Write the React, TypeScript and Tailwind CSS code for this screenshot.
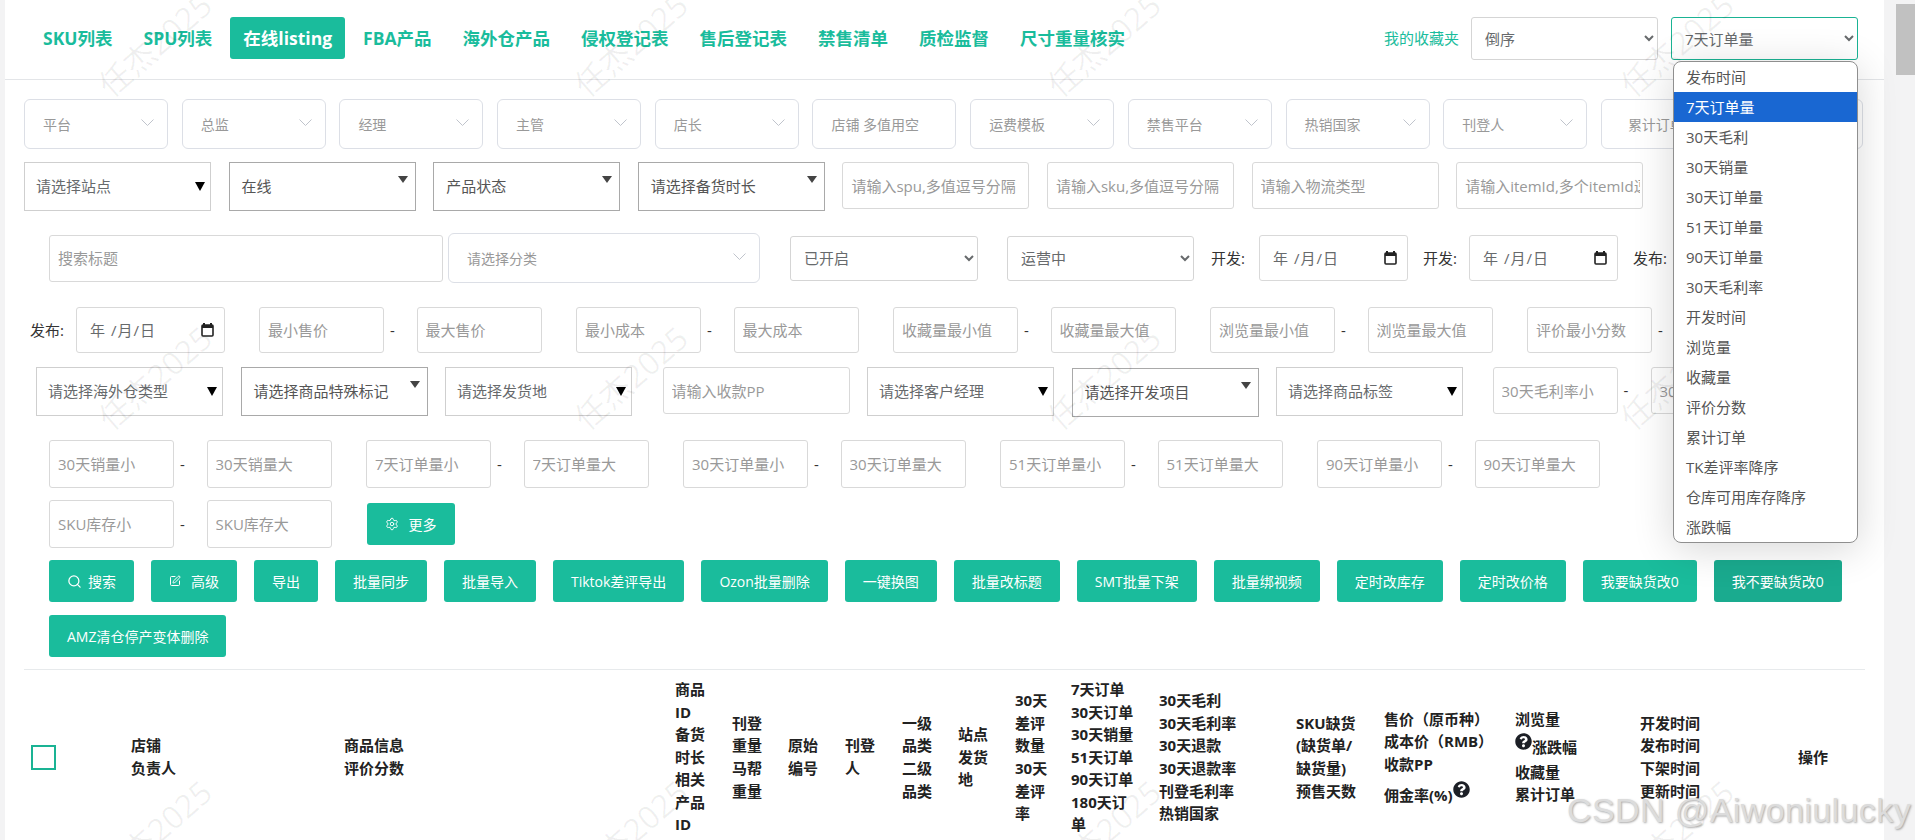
import React from "react";
import { Search, SquarePen, Settings } from "lucide-react";
import { FaQuestionCircle } from "react-icons/fa";

const tabs = ["SKU列表", "SPU列表", "在线listing", "FBA产品", "海外仓产品", "侵权登记表", "售后登记表", "禁售清单", "质检监督", "尺寸重量核实"];
const options = ["发布时间", "7天订单量", "30天毛利", "30天销量", "30天订单量", "51天订单量", "90天订单量", "30天毛利率", "开发时间", "浏览量", "收藏量", "评价分数", "累计订单", "TK差评率降序", "仓库可用库存降序", "涨跌幅"];

function Chevron() {
  return (
    <svg width="13" height="7" viewBox="0 0 13 7" className="shrink-0 -translate-y-[2px]" fill="none" stroke="#c0c4cc" strokeWidth="1">
      <path d="M0.5 0.5 L6.5 6.5 L12.5 0.5" />
    </svg>
  );
}

function Fancy({ label, wide }: { label: string; wide?: boolean }) {
  return (
    <div className={wide ? "flex h-[50px] w-[312px] shrink-0 items-center justify-between rounded-[6px] border border-[#dcdfe6] bg-white pl-[18px] pr-[13px] text-[14px] text-[#999]" : "flex h-[50px] w-[144px] shrink-0 items-center justify-between rounded-[6px] border border-[#dcdfe6] bg-white pl-[18px] pr-[13px] text-[14px] text-[#999]"}>
      <span className="whitespace-nowrap">{label}</span>
      <Chevron />
    </div>
  );
}

function Tri({ label, dark }: { label: string; dark?: boolean }) {
  return (
    <div className={dark ? "flex h-[49px] w-[187px] shrink-0 items-center justify-between border border-[#a9a9a9] bg-white pl-[12px] pr-[7px] text-[15px] text-[#555]" : "flex h-[49px] w-[187px] shrink-0 items-center justify-between border border-[#cfcfcf] bg-white pl-[11px] pr-[5px] text-[15px] text-[#676a6c]"}>
      <span className="whitespace-nowrap">{label}</span>
      {dark ? (
        <svg width="10" height="7" viewBox="0 0 10 7" className="shrink-0 -translate-y-[7px]">
          <path d="M0 0 H10 L5 7 Z" fill="#444" />
        </svg>
      ) : (
        <svg width="10" height="9" viewBox="0 0 10 9" className="shrink-0">
          <path d="M0 0 H10 L5 9 Z" fill="#000" />
        </svg>
      )}
    </div>
  );
}

function Field({ ph, w }: { ph: string; w?: string }) {
  return (
    <input
      readOnly
      placeholder={ph}
      className={(w ?? "w-[125px]") + " h-[47px] shrink-0 rounded-[3px] border border-[#d9d9d9] bg-white pl-[8px] pr-[2px] text-[15px] text-[#676a6c] outline-none placeholder:text-[#999]"}
    />
  );
}

function Range({ a, b, tall }: { a: string; b: string; tall?: boolean }) {
  return (
    <div className="flex shrink-0 items-center">
      <input readOnly placeholder={a} className={(tall ? "h-[48px] " : "h-[46px] ") + "w-[125px] rounded-[3px] border border-[#d9d9d9] bg-white pl-[8px] text-[15px] outline-none placeholder:text-[#999]"} />
      <span className="w-[32.5px] pl-[6px] text-[15px] text-[#333]">-</span>
      <input readOnly placeholder={b} className={(tall ? "h-[48px] " : "h-[46px] ") + "w-[125px] rounded-[3px] border border-[#d9d9d9] bg-white pl-[8px] text-[15px] outline-none placeholder:text-[#999]"} />
    </div>
  );
}

function DateBox() {
  return (
    <div className="flex h-[46px] w-[149px] shrink-0 items-center justify-between rounded-[3px] border border-[#d9d9d9] bg-white pl-[13px] pr-[10px] text-[15px] tracking-[1px] text-[#676a6c]">
      <span className="whitespace-nowrap">年 /月/日</span>
      <svg width="13" height="14" viewBox="0 0 13 14" className="shrink-0">
        <path d="M3 0 V2 M10 0 V2" stroke="#222" strokeWidth="2" />
        <rect x="1" y="2" width="11" height="11" rx="1" fill="none" stroke="#222" strokeWidth="1.6" />
        <rect x="1" y="2" width="11" height="3" fill="#222" />
      </svg>
    </div>
  );
}

function NativeSelect({ value, w, focus }: { value: string; w?: string; focus?: boolean }) {
  return (
    <select
      defaultValue={value}
      className={(w ?? "w-[187px]") + (focus ? " border-[#1ab394]" : " border-[#d5d5d5]") + " h-[43px] shrink-0 rounded-[3px] border bg-white pl-[9px] text-[15px] text-[#676a6c] outline-none"}
    >
      <option>{value}</option>
    </select>
  );
}

function Btn({ children, dark }: { children: React.ReactNode; dark?: boolean }) {
  return (
    <div className={(dark ? "bg-[#1aab8f] " : "bg-[#1abc9c] ") + "flex h-[42px] shrink-0 items-center whitespace-nowrap rounded-[3px] px-[18px] text-[14px] text-white"}>
      {children}
    </div>
  );
}

const Q = () => <FaQuestionCircle className="inline-block align-[3px] text-[#1c1f26]" size={17} />;

const cols: { w: string; lines: React.ReactNode[] }[] = [
  { w: "w-[213px]", lines: ["店铺", "负责人"] },
  { w: "w-[331px]", lines: ["商品信息", "评价分数"] },
  { w: "w-[57px]", lines: ["商品", "ID", "备货", "时长", "相关", "产品", "ID"] },
  { w: "w-[56px]", lines: ["刊登", "重量", "马帮", "重量"] },
  { w: "w-[57px]", lines: ["原始", "编号"] },
  { w: "w-[57px]", lines: ["刊登", "人"] },
  { w: "w-[56px]", lines: ["一级", "品类", "二级", "品类"] },
  { w: "w-[57px]", lines: ["站点", "发货", "地"] },
  { w: "w-[56px]", lines: ["30天", "差评", "数量", "30天", "差评", "率"] },
  { w: "w-[88px]", lines: ["7天订单", "30天订单", "30天销量", "51天订单", "90天订单", "180天订", "单"] },
  { w: "w-[137px]", lines: ["30天毛利", "30天毛利率", "30天退款", "30天退款率", "刊登毛利率", "热销国家"] },
  { w: "w-[88px]", lines: ["SKU缺货", "(缺货单/", "缺货量)", "预售天数"] },
  { w: "w-[131px]", lines: ["售价（原币种）", "成本价（RMB）", "收款PP", <span key="y" className="mt-[5px] block">佣金率(%)<Q /></span>] },
  { w: "w-[125px]", lines: ["浏览量", <span key="z" className="my-[2px] block"><Q />涨跌幅</span>, "收藏量", "累计订单"] },
  { w: "w-[158px]", lines: ["开发时间", "发布时间", "下架时间", "更新时间"] },
  { w: "w-[60px]", lines: ["操作"] },
];

const marks = [
  "left-[83px] top-[21px]", "left-[559px] top-[21px]", "left-[1032px] top-[21px]", "left-[1605px] top-[21px]",
  "left-[83px] top-[354px]", "left-[559px] top-[354px]", "left-[1032px] top-[354px]", "left-[1605px] top-[354px]",
  "left-[83px] top-[808px]", "left-[559px] top-[808px]", "left-[1032px] top-[808px]", "left-[1605px] top-[808px]",
];

export default function App() {
  return (
    <div className="relative flex h-[840px] w-[1915px] overflow-hidden bg-[#f3f3f4] font-['Open_Sans','Noto_Sans_CJK_SC',sans-serif]">
      <main className="ml-[5px] h-[840px] w-[1879px] shrink-0 overflow-hidden bg-white">
        <header className="flex h-[80px] items-start border-b border-[#e3e5e8] pl-[25px] pr-[26px] pt-[17px]">
          <nav className="flex gap-[5px]">
            {tabs.map((t) => (
              <div key={t} className={t === "在线listing" ? "flex h-[42px] items-center whitespace-nowrap rounded-[3px] bg-[#1abc9c] px-[13px] text-[17.5px] font-bold text-white" : "flex h-[42px] items-center whitespace-nowrap px-[13px] text-[17.5px] font-bold text-[#1abc9c]"}>
                {t}
              </div>
            ))}
          </nav>
          <div className="ml-auto flex items-center">
            <span className="mr-[12px] text-[15px] text-[#1abc9c]">我的收藏夹</span>
            <NativeSelect value="倒序" />
            <div className="w-[13px]" />
            <NativeSelect value="7天订单量" focus />
          </div>
        </header>

        <div className="ml-[19px] mt-[19px] flex gap-[13.7px]">
          {["平台", "总监", "经理", "主管", "店长"].map((x) => <Fancy key={x} label={x} />)}
          <Field ph="店铺 多值用空" w="w-[144px] !h-[50px] !rounded-[6px] !border-[#dcdfe6] !pl-[18px] !text-[14px]" />
          {["运费模板", "禁售平台", "热销国家", "刊登人"].map((x) => <Fancy key={x} label={x} />)}
          <Field ph="累计订单" w="w-[262px] !h-[50px] !rounded-[6px] !border-[#dcdfe6] !pl-[26px] !text-[14px]" />
        </div>

        <div className="ml-[19px] mt-[13px] flex items-start gap-[17.6px]">
          <Tri label="请选择站点" />
          <Tri label="在线" dark />
          <Tri label="产品状态" dark />
          <Tri label="请选择备货时长" dark />
          <Field ph="请输入spu,多值逗号分隔" w="w-[187px]" />
          <Field ph="请输入sku,多值逗号分隔" w="w-[187px]" />
          <Field ph="请输入物流类型" w="w-[187px]" />
          <Field ph="请输入itemId,多个itemId逗号分隔" w="w-[187px]" />
        </div>

        <div className="ml-[44px] mt-[22px] flex h-[50px] items-center">
          <Field ph="搜索标题" w="w-[394px]" />
          <div className="ml-[5px]"><Fancy label="请选择分类" wide /></div>
          <div className="ml-[30px]"><NativeSelect value="已开启" w="w-[188px] !h-[45px]" /></div>
          <div className="ml-[29px]"><NativeSelect value="运营中" w="w-[187px] !h-[45px]" /></div>
          <span className="ml-[17px] w-[48px] text-[15px] text-[#333]">开发:</span>
          <DateBox />
          <span className="ml-[15px] w-[46px] text-[15px] text-[#333]">开发:</span>
          <DateBox />
          <span className="ml-[15px] w-[47px] text-[15px] text-[#333]">发布:</span>
          <DateBox />
        </div>

        <div className="ml-[25px] mt-[24px] flex h-[46px] items-center">
          <span className="w-[46px] text-[15px] text-[#333]">发布:</span>
          <DateBox />
          <div className="ml-[34px] flex gap-[34.5px]">
            <Range a="最小售价" b="最大售价" />
            <Range a="最小成本" b="最大成本" />
            <Range a="收藏量最小值" b="收藏量最大值" />
            <Range a="浏览量最小值" b="浏览量最大值" />
            <Range a="评价最小分数" b="评价最大分数" />
          </div>
        </div>

        <div className="ml-[31px] mt-[14px] flex items-start gap-[17.5px]">
          <Tri label="请选择海外仓类型" />
          <Tri label="请选择商品特殊标记" dark />
          <Tri label="请选择发货地" />
          <div className="ml-[13px]"><Field ph="请输入收款PP" w="w-[187px]" /></div>
          <Tri label="请选择客户经理" />
          <div className="mt-[1px]"><Tri label="请选择开发项目" dark /></div>
          <Tri label="请选择商品标签" />
          <div className="ml-[12px] flex items-center">
            <Field ph="30天毛利率小" />
            <span className="w-[33px] pl-[6px] text-[15px] text-[#333]">-</span>
            <Field ph="30天毛利率大" />
          </div>
        </div>

        <div className="ml-[44px] mt-[23px] flex gap-[34.5px]">
          <Range tall a="30天销量小" b="30天销量大" />
          <Range tall a="7天订单量小" b="7天订单量大" />
          <Range tall a="30天订单量小" b="30天订单量大" />
          <Range tall a="51天订单量小" b="51天订单量大" />
          <Range tall a="90天订单量小" b="90天订单量大" />
        </div>

        <div className="ml-[44px] mt-[12px] flex items-center gap-[35px]">
          <Range tall a="SKU库存小" b="SKU库存大" />
          <Btn><Settings size={14} strokeWidth={1.6} className="mr-[10px]" />更多</Btn>
        </div>

        <div className="ml-[44px] mt-[12px] flex gap-[17px]">
          <Btn><Search size={15} strokeWidth={2} className="mr-[6px]" />搜索</Btn>
          <Btn><SquarePen size={12} strokeWidth={2} className="mr-[10px]" />高级</Btn>
          {["导出", "批量同步", "批量导入", "Tiktok差评导出", "Ozon批量删除", "一键换图", "批量改标题", "SMT批量下架", "批量绑视频", "定时改库存", "定时改价格", "我要缺货改0"].map((x) => <Btn key={x}>{x}</Btn>)}
          <Btn dark>我不要缺货改0</Btn>
        </div>

        <div className="ml-[44px] mt-[13px] flex">
          <Btn>AMZ清仓停产变体删除</Btn>
        </div>

        <div className="ml-[19px] mt-[12px] w-[1841px] border-t border-[#e7eaec]" />

        <div className="ml-[26px] flex h-[174px] items-center text-[15px] font-bold leading-[22.6px] text-[#222]">
          <div className="w-[100px] shrink-0">
            <div className="h-[25px] w-[25px] border-2 border-[#1ab394] bg-white" />
          </div>
          {cols.map((c, i) => (
            <div key={i} className={c.w + " shrink-0 whitespace-nowrap"}>
              {c.lines.map((l, j) => <div key={j}>{l}</div>)}
            </div>
          ))}
        </div>
      </main>

      <aside className="ml-[12px] mt-[4px] h-[71px] w-[19px] bg-[#c1c1c1]" />

      {marks.map((m) => (
        <div key={m} className={m + " pointer-events-none absolute z-10 w-[144px] -rotate-[41deg] whitespace-nowrap text-center text-[32px] leading-[48px] text-black/[0.06]"}>任杰2025</div>
      ))}

      <ul className="absolute left-[1673px] top-[61px] z-20 w-[185px] overflow-hidden rounded-[8px] border border-[#8f8f8f] bg-white shadow-[0_6px_40px_rgba(0,0,0,0.16)]">
        {options.map((o) => (
          <li key={o} className={o === "7天订单量" ? "flex h-[30px] items-center bg-[#1967d2] pl-[12px] text-[15px] text-white" : "flex h-[30px] items-center pl-[12px] text-[15px] text-[#555]"}>
            {o}
          </li>
        ))}
      </ul>

      <div className="pointer-events-none absolute left-[1567px] top-[790px] z-30 whitespace-nowrap font-['Liberation_Sans',sans-serif] text-[34px] leading-[40px] tracking-[0.4px] text-[#dcdcdc] [text-shadow:1px_1px_2px_rgba(90,90,90,0.5)]">
        CSDN @Aiwoniulucky
      </div>
    </div>
  );
}
